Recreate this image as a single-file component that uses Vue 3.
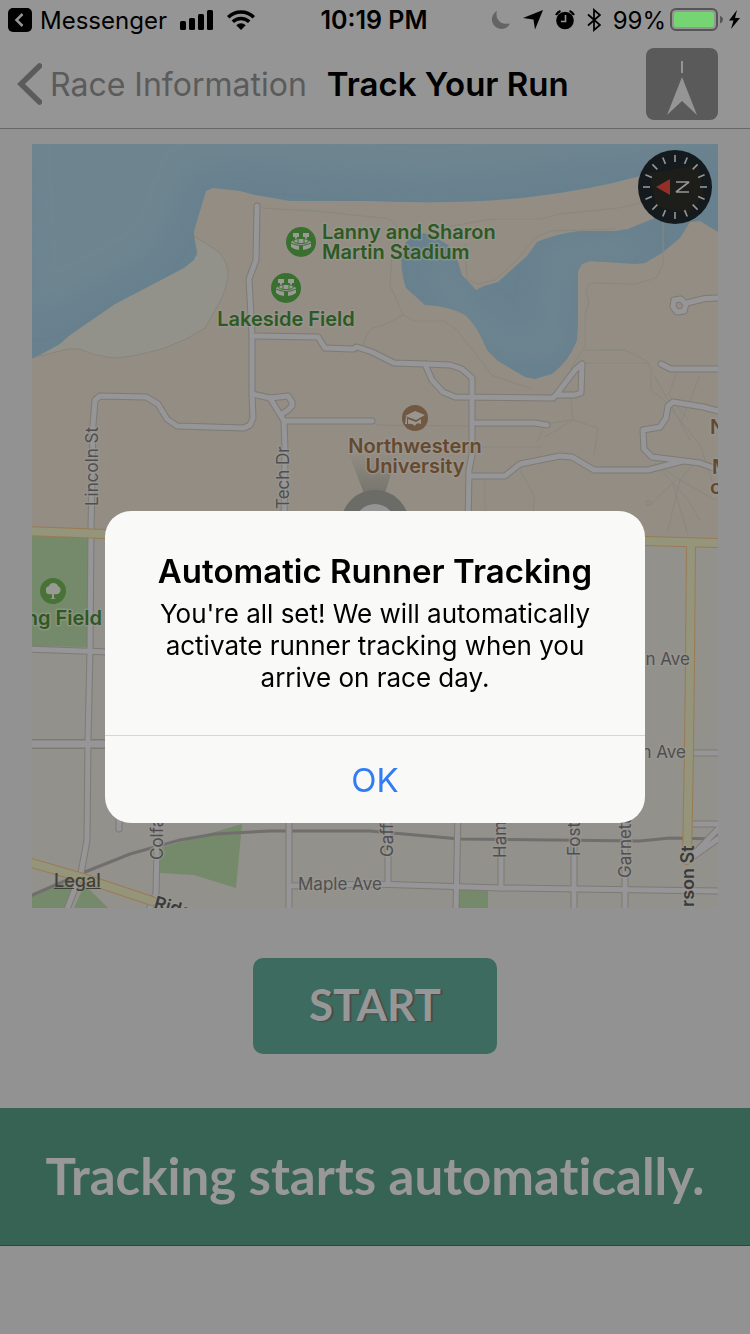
<script setup>
import { ref } from 'vue'

const alertOpen = ref(true)

const ticks = Array.from({ length: 16 }, (_, i) => i * 22.5)

const streets = [
  'M257 206L256 260L249 279L252 335V394L253 418L250 425L244 428L177 426L167 419L158 404L146 397L100 396L95 400L93 425L91 530L90 650L88 740L87 840L81 873L66 912',
  'M252 336L318 337L325 348L353 349L357 347L372 352L394 363L425 364L450 365L462 369L472 378V455L469 470L468 530',
  'M425 364L432 380L443 392L455 397L553 398L556 395L575 370L582 364L581 393L575 395L557 395',
  'M252 394L270 398L288 396L292 402V406L288 410L282 414',
  'M270 398L284 421L285 450L284 530',
  'M285 421H372',
  'M472 423H535L547 425',
  'M469 476H505L520 464L560 456L572 457L594 470H648L683 461',
  'M722 412L703 407L673 402L668 406L666 418L660 427L643 430L644 449L652 457L700 463L722 471',
  'M687 303L705 298.500L722 298',
  'M661 364L671 369H722',
  'M28 649L110 652',
  'M119 810V829',
  'M157 810V850L156 893L148 912',
  'M289 810V912',
  'M289 886L375 884L500 888L722 891',
  'M388 810V884',
  'M458 810L456 912',
  'M501 810V888',
  'M574 810V912',
  'M625 810V912',
  'M690 753H722',
  'M690 824H722',
  'M694 854L722 825M694 856L722 836'
]

const footpaths = [
  'M261 208L316 211L390 219L400 230L392 250L390 285L403 315L414 321H444L455 328L493 376L530 388',
  'M403 315L384 325L372 328L365 338L363 346',
  'M440 228L492 219H540L560 214L618 208L640 203',
  'M465 243L467 280L478 284L495 280L515 262L535 238L550 231L615 229',
  'M663 220V265L656 278L636 284L590 283L586 290L589 302L585 315V346L570 370',
  'M585 350L602 350L625 350L645 360L651 368V390L665 401L700 445L715 490',
  'M651 363H585M602 350L625 350',
  'M376 425L470 426M482 447H542M537 442L545 424L573 420L598 428L594 455M545 437L573 420L570 390',
  'M485 475V515M520 470L534 495L533 515',
  'M654 375L690 440M700 375L680 425M676 373L669 395L688 420',
  'M655 463L680 480L715 500M668 530L680 480L697 460M650 505L676 480M688 535L673 485M655 463L688 500L700 520'
]
</script>

<template>
  <div class="screen">
    <div class="status-bar">
      <div class="status-left">
        <a class="back-app" href="#">
          <svg width="24" height="24" viewBox="0 0 24 24" aria-hidden="true">
            <rect width="24" height="24" rx="5" fill="#000" />
            <path d="M14.500 6L8.500 12L14.500 18" fill="none" stroke="#959595" stroke-width="2.500" />
          </svg>
          <span>Messenger</span>
        </a>
        <svg class="signal" width="34" height="20" viewBox="0 0 34 20" aria-hidden="true">
          <rect x="0" y="11" width="6" height="9" rx="1.500" />
          <rect x="9" y="8" width="6" height="12" rx="1.500" />
          <rect x="18" y="4" width="6" height="16" rx="1.500" />
          <rect x="27" y="0" width="6" height="20" rx="1.500" />
        </svg>
        <svg width="28" height="20" viewBox="0 0 28 20" aria-hidden="true">
          <g fill="none" stroke="#000" stroke-width="3.400">
            <path d="M1.200 7.200A18.200 18.200 0 0 1 26.800 7.200" />
            <path d="M5.800 11.800A11.700 11.700 0 0 1 22.200 11.800" />
          </g>
          <path d="M9.300 15.200A6.700 6.700 0 0 1 18.700 15.200L14 20Z" />
        </svg>
      </div>
      <time class="clock">10:19 PM</time>
      <div class="status-right">
        <svg width="20" height="20" viewBox="0 0 20 20" aria-hidden="true">
          <path d="M6 1A9.500 9.500 0 1 0 19 13.500C10 15.500 3.500 9 6 1Z" fill="#646464" />
        </svg>
        <svg width="20" height="20" viewBox="0 0 20 20" aria-hidden="true">
          <path d="M20 0L12 19.500L10.500 9.500L0 8Z" />
        </svg>
        <svg width="20" height="20" viewBox="0 0 20 20" aria-hidden="true">
          <circle cx="10" cy="10.500" r="8.800" />
          <path d="M1 5A9 9 0 0 1 5.500 1M14.500 1A9 9 0 0 1 19 5" fill="none" stroke="#000" stroke-width="2.200" />
          <path d="M10.500 5V11.500H6" fill="none" stroke="#959595" stroke-width="1.600" />
        </svg>
        <svg width="14" height="24" viewBox="0 0 14 24" aria-hidden="true">
          <path d="M1 6.500L13 17L7 22V2L13 7L1 17.500" fill="none" stroke="#000" stroke-width="1.800" />
        </svg>
        <span class="percent">99%</span>
        <svg class="battery" width="70" height="24" viewBox="0 0 70 24" role="img" aria-label="Battery charging">
          <rect x="1" y="1" width="46" height="21" rx="5" fill="none" stroke="#555" stroke-width="2" />
          <rect x="4" y="4" width="40" height="15" rx="2" fill="#75d572" />
          <path d="M50 8Q53 9 53 11.500Q53 14 50 15.500Z" fill="#555" />
          <path d="M67 2L59 12.500H63.500L61 21L70 10H65Z" />
        </svg>
      </div>
    </div>

    <header class="nav-bar">
      <button class="nav-back" type="button">
        <svg width="26" height="42" viewBox="0 0 26 42" aria-hidden="true">
          <path d="M23.500 3L5 21L23.500 39" fill="none" stroke="#5b5b5b" stroke-width="5.500" stroke-linecap="round" />
        </svg>
        <span>Race Information</span>
      </button>
      <h1 class="nav-title">Track Your Run</h1>
      <button class="locate" type="button" aria-label="Center map">
        <svg width="72" height="72" viewBox="0 0 72 72" aria-hidden="true">
          <path d="M36 13V25" stroke="#959595" stroke-width="2" />
          <path d="M36 29L51 67L36 53L21 67Z" fill="#959595" />
        </svg>
      </button>
    </header>

    <main class="content">
      <div class="map">
        <svg class="map-canvas" viewBox="32 144 686 764" role="img" aria-label="Course map">
          <defs>
            <linearGradient id="beam" x1="0" y1="0" x2="0" y2="1">
              <stop offset="0" stop-color="#666760" stop-opacity="0" />
              <stop offset="1" stop-color="#666760" stop-opacity="0.7" />
            </linearGradient>
            <filter id="soft" x="-20%" y="-20%" width="140%" height="140%">
              <feGaussianBlur stdDeviation="12" />
            </filter>
            <clipPath id="waterClip">
              <path d="M32 144H718V232L700 221L690 222L680 238L662 253L645 263L635 264L590 261L582 264L578 271V320L577 340Q570 360 552 374L535 379L525 377L498 361L487 350Q477 325 465 315Q450 306 425 305L406 288Q400 270 402 255Q404 238 418 233L430 234L448 245L458 262L462 275L476 290L484 286L498 282L527 256L537 242Q555 234 580 231H615L628 229L650 220L690 205L702 185L690 163L640 176Q590 190 530 197Q460 205 370 201H290L255 195L240 191L213 188L206 191L194 231V238L197 252L194 260L184 268L115 304L70 335L60 344L40 355L32 358Z" />
            </clipPath>
            <g id="stadium">
              <circle r="15" fill="#39702f" />
              <g fill="#999b94">
                <path d="M-8 -9H-2V-5H-4V-3H-6V-5H-8ZM2 -9H8V-5H6V-3H4V-5H2Z" />
                <path d="M-10 0Q0 -8 10 0V5Q6 8 2 8V4H-2V8Q-6 8 -10 5Z" />
              </g>
              <ellipse cy="-1" rx="7.500" ry="2.600" fill="none" stroke="#39702f" />
              <path d="M-10 1Q0 6 10 1M-3 -3V1M3 -3V1" fill="none" stroke="#39702f" />
            </g>
          </defs>

          <rect x="32" y="144" width="686" height="764" fill="#93918b" />
          <path d="M32 144H718V543L32 531Z" fill="#938d84" />
          <path d="M194 236L219 252Q229 265 228 275Q227 290 218 305L205 328L186 339L165 348Q130 358 112 358L92 354L80 349H68L32 358L60 342L115 303L184 267L197 255Z" fill="#92918a" stroke="#8a857a" />
          <g clip-path="url(#waterClip)">
            <rect x="32" y="144" width="686" height="250" fill="#68818e" />
            <path d="M20 100H730V145L600 160L430 178L240 164L190 168L168 225L150 255L30 318Z" fill="#6e8590" filter="url(#soft)" />
            <path d="M430 262L470 318L510 345L550 345L558 255L640 247" fill="none" stroke="#6e8590" stroke-width="22" filter="url(#soft)" />
          </g>

          <g fill="#758a6b">
            <path d="M32 535L88 537V647L32 646Z" />
            <path d="M160 848L242 824L236 888L194 875L160 873Z" />
            <path d="M459 889L488 890V908H459Z" />
            <path d="M32 896L60 883L76 886L66 908H32ZM84 886L90 890L108 908H74Z" />
          </g>

          <g fill="none" stroke="#878880" stroke-width="1">
            <path v-for="d in footpaths" :key="d" :d="d" />
          </g>
          <rect x="646" y="501" width="4" height="4" fill="none" stroke="#85857d" />

          <path d="M28 897L85 872L130 854L180 840L215 834L270 831H370L460 839L640 841L670 838L722 839" fill="none" stroke="#716f6d" stroke-width="3" />

          <g fill="none" stroke-linejoin="round" stroke-linecap="round">
            <g stroke="#7e7a74" stroke-width="7">
              <path v-for="d in streets" :key="d" :d="d" />
              <path d="M674 300L681 299L686 304L684 311L677 312L673 307Z" />
            </g>
            <path d="M28 744H110" stroke="#7e7a74" stroke-width="10" />
            <g stroke="#969698" stroke-width="5">
              <path v-for="d in streets" :key="d" :d="d" />
              <path d="M674 300L681 299L686 304L684 311L677 312L673 307Z" />
            </g>
            <path d="M28 744H110" stroke="#969698" stroke-width="7" />
            <g stroke="#9a7a54" stroke-width="10">
              <path d="M28 531L105 534L645 541L722 543M691 543L690 660L689 750L687 860" />
              <path d="M28 862L80 877L152 901" />
            </g>
            <g stroke="#95957b" stroke-width="8">
              <path d="M28 531L105 534L645 541L722 543M691 543L690 660L689 750L687 860" />
              <path d="M28 862L80 877L152 901" />
            </g>
          </g>

          <path d="M348 452L398 452L384 496H365Z" fill="url(#beam)" />
          <circle cx="375" cy="524" r="34" fill="#6b6b67" />
          <circle cx="375" cy="524" r="20" fill="#959595" />

          <use href="#stadium" x="301" y="242" />
          <use href="#stadium" x="286" y="288" />

          <g transform="translate(53 591)">
            <circle r="13" fill="#497236" />
            <path d="M-1 7V3Q-7 4 -7 0Q-8 -4 -4 -5Q-3 -8 0 -8Q4 -8 5 -5Q9 -3 7 1Q6 4 1 3V7L3 8H-3Z" fill="#989a94" />
          </g>
          <g transform="translate(415 418)">
            <circle r="13" fill="#705842" />
            <path d="M-10 -2L0 -7L10 -3L1 2Z" fill="#999690" />
            <path d="M-7 1L1 4L6 1V6Q1 4 0 8Q-3 5 -7 6ZM-9 -1H-8V6H-10Z" fill="#999690" />
          </g>

          <g class="label green">
            <text x="322" y="239">Lanny and Sharon</text>
            <text x="322" y="259">Martin Stadium</text>
            <text x="286" y="326" text-anchor="middle">Lakeside Field</text>
            <text x="102" y="625" text-anchor="end">ng Field</text>
          </g>
          <g class="label brown">
            <text x="415" y="453" text-anchor="middle">Northwestern</text>
            <text x="415" y="473" text-anchor="middle">University</text>
            <text x="710" y="434">N</text>
            <text x="712" y="474">M</text>
            <text x="710" y="494">o</text>
          </g>
          <g class="label road">
            <text transform="translate(98 506) rotate(-90)">Lincoln St</text>
            <text transform="translate(289 509) rotate(-90)">Tech Dr</text>
            <text transform="translate(163 860) rotate(-90)">Colfax</text>
            <text transform="translate(393 857) rotate(-90)">Gaffield</text>
            <text transform="translate(506 858) rotate(-90)">Hamlin</text>
            <text transform="translate(580 856) rotate(-90)">Foster</text>
            <text transform="translate(631 878) rotate(-90)">Garnett</text>
            <text x="298" y="890">Maple Ave</text>
            <text x="690" y="665" text-anchor="end">n Ave</text>
            <text x="686" y="758" text-anchor="end">n Ave</text>
          </g>
          <g class="label major">
            <text transform="translate(694 907) rotate(-90)">rson St</text>
            <text transform="translate(153 908) rotate(16)">Ridge</text>
          </g>
        </svg>

        <button class="compass" type="button" aria-label="Compass, north is left">
          <svg width="74" height="74" viewBox="0 0 74 74" aria-hidden="true">
            <circle cx="37" cy="37" r="37" fill="#141a1d" />
            <path d="M11 23L60 15L66 45L50 64L18 56Z" fill="#1d1d19" />
            <path
              v-for="t in ticks"
              :key="t"
              d="M37 5V12"
              :transform="`rotate(${t} 37 37)`"
              stroke="#969696"
              stroke-width="1.600"
            />
            <path d="M18 37L32 29V45Z" fill="#932f28" />
            <path d="M38 32H51L38 42H51" fill="none" stroke="#969696" stroke-width="1.600" stroke-linejoin="bevel" />
          </svg>
        </button>
        <a class="legal" href="#">Legal</a>
      </div>

      <button class="start" type="button">START</button>
    </main>

    <p class="banner">Tracking starts automatically.</p>

    <div v-if="alertOpen" class="overlay">
      <section class="alert" role="alertdialog" aria-labelledby="alert-title" aria-describedby="alert-text">
        <div class="alert-body">
          <h2 id="alert-title">Automatic Runner Tracking</h2>
          <p id="alert-text">You're all set! We will automatically activate runner tracking when you arrive on race day.</p>
        </div>
        <button class="alert-ok" type="button" @click="alertOpen = false">OK</button>
      </section>
    </div>
  </div>
</template>

<style>
body {
  margin: 0;
  background: #929292;
}
</style>

<style scoped>
.screen {
  display: flex;
  flex-direction: column;
  min-height: 100vh;
  background: #929292;
  color: #000;
  font-family: Inter, "Liberation Sans", sans-serif;
}

.screen svg {
  display: block;
  flex: none;
}

button {
  padding: 0;
  border: 0;
  background: none;
  color: inherit;
  font: inherit;
}

.status-bar {
  display: grid;
  grid-template-columns: 1fr auto 1fr;
  align-items: center;
  height: 40px;
  padding: 0 10px 0 8px;
  background: #959595;
  font-size: 24px;
}

.status-left,
.status-right,
.back-app {
  display: flex;
  align-items: center;
}

.back-app {
  gap: 8px;
  color: #000;
  text-decoration: none;
}

.signal {
  margin: 0 13px;
}

.clock {
  font-size: 25px;
  font-weight: 600;
}

.status-right {
  justify-content: flex-end;
  gap: 12px;
}

.battery {
  margin-left: -8px;
}

.nav-bar {
  display: flex;
  align-items: center;
  height: 88px;
  padding: 0 32px 0 16px;
  border-bottom: 1px solid #686868;
  background: #959595;
}

.nav-back {
  display: flex;
  align-items: center;
  gap: 8px;
  color: #5b5b5b;
  font-size: 32px;
  white-space: nowrap;
}

.nav-title {
  flex: 1;
  margin: 0 0 0 20px;
  font-size: 33px;
  font-weight: 600;
  white-space: nowrap;
}

.locate {
  border-radius: 8px;
  background: #5a5a5a;
}

.content {
  display: flex;
  flex-direction: column;
  align-items: center;
  padding: 15px 32px 54px;
}

.map {
  position: relative;
  width: 100%;
  overflow: hidden;
}

.map-canvas {
  width: 100%;
  height: auto;
}

.label {
  font-size: 20px;
  paint-order: stroke;
  stroke: #9b9892;
  stroke-width: 3px;
  stroke-linejoin: round;
  stroke-opacity: 0.6;
}

.green {
  fill: #2c5a22;
  font-weight: 600;
}

.brown {
  fill: #65492f;
  font-weight: 600;
}

.road {
  fill: #4f4f51;
  font-size: 17px;
}

.major {
  fill: #3b3b3d;
  font-size: 18px;
  font-weight: 600;
}

.compass {
  position: absolute;
  top: 6px;
  right: 6px;
  border-radius: 50%;
}

.legal {
  position: absolute;
  bottom: 16px;
  left: 22px;
  color: #3f403b;
  font-size: 18px;
  font-weight: 500;
  line-height: 22px;
}

.start {
  width: 244px;
  height: 96px;
  margin-top: 50px;
  padding-bottom: 4px;
  border-radius: 10px;
  background: #3e6b5f;
  color: #979797;
  font-family: Lato, "Liberation Sans", sans-serif;
  font-size: 44px;
  font-weight: 700;
  text-shadow: 2px 1px 1px #4a4a4a;
}

.banner {
  margin: 0;
  padding: 34px 16px 35px;
  border-bottom: 1px solid #274a3d;
  background: #376355;
  color: #989898;
  font-family: Lato, "Liberation Sans", sans-serif;
  font-size: 51px;
  font-variant-ligatures: none;
  font-weight: 700;
  line-height: 68px;
  text-align: center;
}

.overlay {
  position: fixed;
  inset: 0;
  display: flex;
  align-items: center;
  justify-content: center;
}

.alert {
  width: 72%;
  max-width: 540px;
  overflow: hidden;
  border-radius: 26px;
  background: #f9f9f8;
  text-align: center;
}

.alert-body {
  padding: 39px 32px 40px;
}

.alert h2 {
  margin: 0;
  font-size: 33px;
  font-weight: 600;
  line-height: 42px;
}

.alert p {
  margin: 6px 0 0;
  padding: 0 16px 1px;
  font-size: 26px;
  line-height: 32px;
}

.alert-ok {
  width: 100%;
  height: 88px;
  border-top: 1px solid #d6d6d6;
  color: #2f7cf6;
  font-size: 33px;
}
</style>
